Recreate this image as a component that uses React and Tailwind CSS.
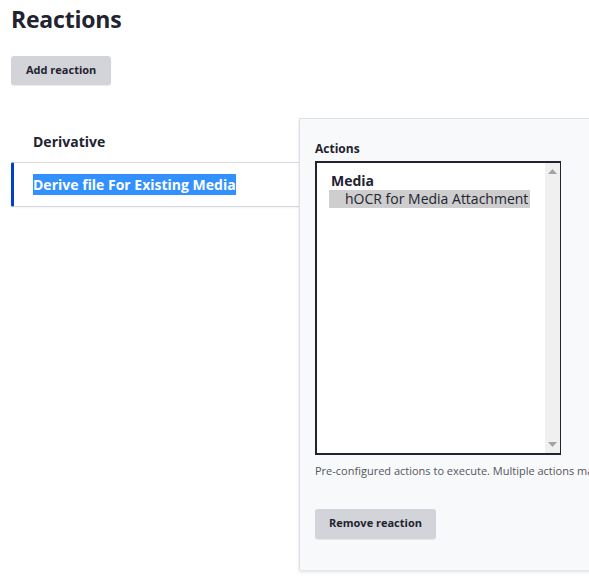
import React from "react";

const font = { fontFamily: "'Open Sans', 'Noto Sans', sans-serif" };

const Scrollbar = () => (
  <div className="w-[15px] shrink-0 bg-[#f0f0f0] flex flex-col items-center justify-between py-[6px]">
    <svg width="9" height="5" viewBox="0 0 9 5">
      <path d="M0 5 L4.5 0 L9 5 Z" fill="#a3a3a3" />
    </svg>
    <svg width="9" height="5" viewBox="0 0 9 5">
      <path d="M0 0 L4.5 5 L9 0 Z" fill="#a3a3a3" />
    </svg>
  </div>
);

export default function App() {
  return (
    <div
      className="w-[589px] h-[585px] overflow-hidden bg-white text-[#222330]"
      style={font}
    >
      <div className="pl-[11px]">
        <h1 className="text-[23px] font-bold leading-none pt-[8px] tracking-[-0.2px]">
          Reactions
        </h1>
        <button className="mt-[25px] h-[29px] px-[15px] rounded-[3px] bg-[#d3d4d9] text-[11px] font-bold shadow-[0_1px_1px_rgba(0,0,0,0.08)]">
          Add reaction
        </button>

        <div className="mt-[33px] flex items-start">
          <div className="w-[289px] shrink-0 mt-[2px]">
            <div className="h-[42px] flex items-center pl-[22px] text-[14px] font-bold">
              Derivative
            </div>
            <div className="h-[45px] flex items-center pl-[19px] border-l-[3px] border-l-[#003ecc] border-y border-y-[#d8d9e0] bg-white rounded-l-[2px] shadow-[0_1px_2px_rgba(0,0,0,0.05)]">
              <span className="bg-[#3390ff] text-white text-[14px] font-bold leading-[21px]">
                Derive file For Existing Media
              </span>
            </div>
          </div>

          <div className="w-[330px] shrink-0 -ml-px h-[452px] bg-[#f8f9fa] border-l border-t border-[#dedfe4] shadow-[0_2px_3px_rgba(0,0,0,0.12)] pl-[15px] pt-[22px]">
            <div className="text-[12px] font-bold leading-[16px]">Actions</div>
            <div className="mt-[4px] w-[246px] h-[294px] border-2 border-[#222330] border-r-[1px] bg-white flex">
              <div className="flex-1 pt-[9px] pl-[14px]">
                <div className="text-[14px] font-bold leading-[18px]">Media</div>
                <div className="-ml-[2px] w-fit bg-[#cecece] text-[14px] leading-[18px] pl-[16px] pr-[2px]">
                  hOCR for Media Attachment
                </div>
              </div>
              <Scrollbar />
            </div>
            <div className="mt-[8px] text-[11px] text-[#545560] whitespace-nowrap">
              Pre-configured actions to execute. Multiple actions may be selected.
            </div>
            <button className="mt-[29px] h-[30px] px-[14px] rounded-[3px] bg-[#d3d4d9] text-[11px] font-bold shadow-[0_1px_1px_rgba(0,0,0,0.08)]">
              Remove reaction
            </button>
          </div>
        </div>
      </div>
    </div>
  );
}
